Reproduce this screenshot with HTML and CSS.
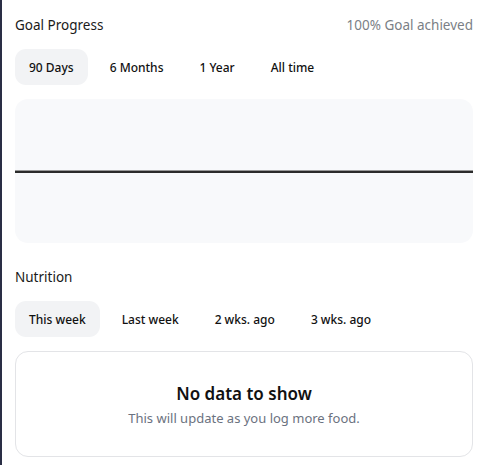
FILE: index.html
```html
<!DOCTYPE html>
<html>
<head>
<meta charset="utf-8">
<link rel="stylesheet" href="styles.css">
</head>
<body>
<div class="page">
  <section class="section">
    <div class="header">
      <span class="title">Goal Progress</span>
      <span class="meta">100% Goal achieved</span>
    </div>
    <div class="tabs">
      <span class="tab active">90 Days</span>
      <span class="tab">6 Months</span>
      <span class="tab">1 Year</span>
      <span class="tab">All time</span>
    </div>
    <div class="chart">
      <div class="line"></div>
    </div>
  </section>
  <section class="section">
    <div class="header">
      <span class="title">Nutrition</span>
    </div>
    <div class="tabs">
      <span class="tab active">This week</span>
      <span class="tab">Last week</span>
      <span class="tab">2 wks. ago</span>
      <span class="tab">3 wks. ago</span>
    </div>
    <div class="empty">
      <div class="empty-title">No data to show</div>
      <div class="empty-sub">This will update as you log more food.</div>
    </div>
  </section>
</div>
</body>
</html>
```
FILE: styles.css
```css
html, body {
  margin: 0;
  padding: 0;
  background: #ffffff;
}
body {
  font-family: "Noto Sans", "Open Sans", sans-serif;
  color: #111111;
  border-left: 2px solid #2a2e45;
  min-height: 465px;
  box-sizing: border-box;
}
.page {
  padding: 14px 12px 0 13px;
  display: flex;
  flex-direction: column;
  gap: 23px;
}
.section {
  display: flex;
  flex-direction: column;
}
.header {
  display: flex;
  justify-content: space-between;
  align-items: center;
  height: 21px;
}
.title {
  font-size: 13.5px;
  color: #1a1a1a;
}
.meta {
  font-size: 13.5px;
  color: #7b7f86;
}
.tabs {
  display: flex;
  margin-top: 14px;
  gap: 8px;
}
.tab {
  height: 36px;
  display: flex;
  align-items: center;
  padding: 0 14px;
  border-radius: 11px;
  font-size: 12px;
  font-weight: 500;
  color: #111;
}
.tab.active {
  background: #f2f3f5;
}
.chart {
  margin-top: 14px;
  height: 144px;
  background: #f8f9fb;
  border-radius: 13px;
  display: flex;
  align-items: center;
}
.line {
  width: 100%;
  height: 2px;
  background: #2b2b2b;
  border-top: 0.5px solid #9a9a9a;
}
.empty {
  margin-top: 14px;
  height: 106px;
  box-sizing: border-box;
  border: 1px solid #e3e4e7;
  border-radius: 13px;
  display: flex;
  flex-direction: column;
  align-items: center;
  justify-content: center;
  gap: 4px;
}
.empty-title {
  font-size: 17px;
  font-weight: 600;
  color: #111;
}
.empty-sub {
  font-size: 13px;
  color: #6b7280;
}
```
